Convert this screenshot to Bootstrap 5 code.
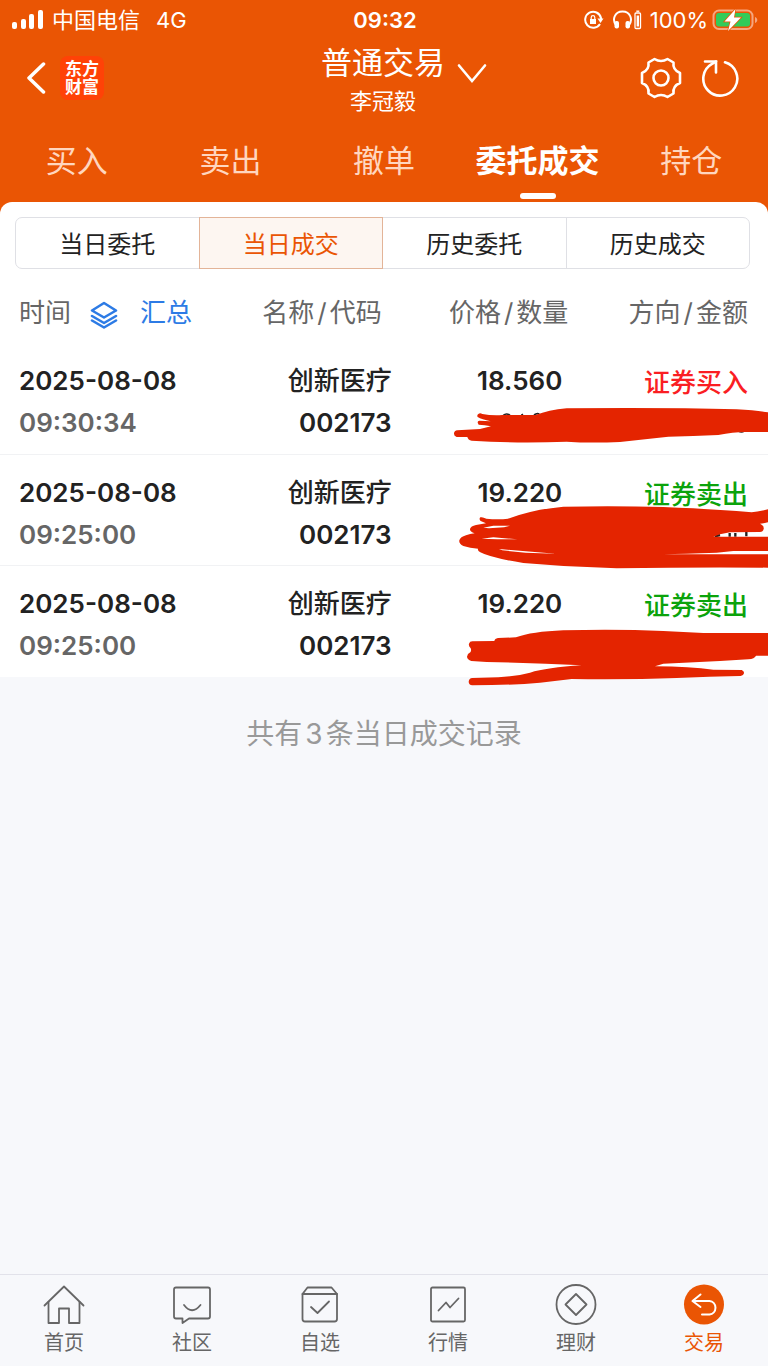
<!DOCTYPE html>
<html lang="zh-CN">
<head>
<meta charset="utf-8">
<meta name="viewport" content="width=device-width, initial-scale=1">
<title>普通交易 - 当日成交</title>
<link href="https://cdn.jsdelivr.net/npm/bootstrap@5.3.0/dist/css/bootstrap.min.css" rel="stylesheet">
<style>
  :root { --brand: #ea5504; --ink: #222; --muted: #666; --line: #dfe0e5; --page: #f7f8fb; }
  body { font-family: Inter, "Noto Sans CJK SC", sans-serif; background: var(--page); color: var(--ink); }
  svg { display: block; flex: none; }
  button, a { color: inherit; text-decoration: none; }
  .plain { background: none; border: 0; padding: 0; }
  .topbar { background: var(--brand); padding-bottom: 12px; }
  .status { height: 40px; font-size: 22px; line-height: 40px; padding: 0 10px 0 12px; }
  .status > div { flex: 1 1 0; }
  .clock { font-size: 22px; font-weight: 600; }
  .title-row { height: 80px; padding: 0 29px 4px 27px; }
  .title-row > div { flex: 1 1 0; }
  .title-block { padding-top: 4px; }
  .app-logo { width: 44px; height: 44px; border-radius: 8px; margin-left: 13px; background: #ff4207; font-size: 17px; line-height: 18px; font-weight: 700; }
  .page-title { font-size: 31px; line-height: 42px; font-weight: 400; margin: 0; }
  .user-name { font-size: 22px; line-height: 34px; }
  .chevron { position: absolute; left: 100%; top: 21px; margin-left: 12px; }
  .tools { gap: 19px; }
  .main-tabs { height: 82px; }
  .main-tabs a { flex: 1 1 0; font-size: 31px; line-height: 82px; color: #ffd6bf; position: relative; }
  .main-tabs a.active { font-weight: 700; color: #fff; }
  .main-tabs a.active::after { content: ""; position: absolute; left: 50%; bottom: 3px; width: 36px; height: 6px; margin-left: -18px; border-radius: 3px; background: #fff; }
  .sheet { background: #fff; border-radius: 12px 12px 0 0; margin-top: -12px; padding-top: 15px; }
  .segments { margin: 0 18px 0 15px; border: 1px solid var(--line); border-radius: 7px; height: 52px; }
  .segments button { flex: 1 1 0; font-size: 24px; padding-top: 3px; border-left: 1px solid var(--line); }
  .segments button:first-child { border-left: 0; }
  .segments button.active { color: var(--brand); background: #fdf6f1; border: 1px solid #e3b498; margin: -1px -1px -1px 0; z-index: 1; }
  .deals { width: 100%; table-layout: fixed; font-size: 26px; line-height: 42px; }
  .deals th { font-weight: 400; color: var(--muted); padding: 23px 0 9px; }
  .deals td { font-weight: 600; padding: 17px 0 9px; border-bottom: 1px solid #f1f2f4; height: 111px; vertical-align: top; white-space: nowrap; }
  .deals tbody tr:last-child td { border-bottom-color: #fff; }
  .deals .c-time { padding-left: 19px; }
  .deals th.c-name { padding-right: 10px; }
  .deals td.c-price { padding-right: 6px; }
  .deals .c-side { padding-right: 20px; }
  .deals td.c-side { position: relative; padding-top: 19px; padding-bottom: 7px; }
  .deals .cn { font-weight: 500; }
  .gapped { margin: 0 3px; }
  .clock-time { color: var(--muted); }
  .summary { color: #2d7be5; margin-left: 19px; gap: 22px; }
  .summary svg { margin-top: 4px; }
  .buy { color: #fa1e23; }
  .sell { color: #0ba30b; }
  .scribble { position: absolute; right: 0; top: 0; z-index: 2; overflow: visible; fill: #e42400; }
  .total { font-size: 28px; line-height: 42px; color: #999; margin: 36px 0; }
  .bottom-nav { border-top: 1px solid #e2e2ea; height: 92px; padding-top: 9px; }
  .bottom-nav a { flex: 1 1 0; font-size: 20px; line-height: 34px; color: var(--muted); }
  .bottom-nav a.active { color: var(--brand); }
</style>
</head>
<body class="d-flex flex-column min-vh-100">
<header class="topbar text-white">
  <div class="status d-flex align-items-center">
    <div class="d-flex align-items-center">
      <svg width="32" height="20" viewBox="0 0 32 20" fill="#fff"><rect y="12" width="5" height="7" rx="2"/><rect x="9" y="9" width="5" height="10" rx="2"/><rect x="17" y="4" width="5" height="15" rx="2"/><rect x="26" width="5" height="19" rx="2"/></svg>
      <span class="ms-2">中国电信</span><span class="ms-3">4G</span>
    </div>
    <div class="clock text-center">09:32</div>
    <div class="d-flex align-items-center justify-content-end">
      <svg width="20" height="20" viewBox="0 0 20 20" fill="none" stroke="#fff" stroke-width="2"><path d="M16 14a8 8 0 1 1 1-6v2"/><path d="M13.500 8.500h6L16.500 13z" fill="#fff" stroke="none"/><path d="M6 9h6v5H6z" fill="#fff" stroke="none"/><path d="M7.200 9.500V7.500a1.800 1.800 0 0 1 3.600 0v2" stroke-width="1.200"/></svg>
      <svg class="ms-2" width="30" height="20" viewBox="0 0 30 20" fill="none" stroke="#fff"><path d="M4.500 16C-.500 10 2.500 1.500 10.500 1.500S21.500 10 16.500 16" stroke-width="2"/><rect x="2.500" y="11" width="4.500" height="7.500" rx="2" fill="#fff" stroke="none"/><rect x="13.500" y="11" width="4.500" height="7.500" rx="2" fill="#fff" stroke="none"/><rect x="23" y="3" width="5.500" height="15.500" rx="1" stroke-width="1.300"/><path d="M25.800 5.500v11" stroke-width="2.400"/><path d="M24.300 1.200h3" stroke-width="1.400"/></svg>
      <span class="ms-2">100%</span>
      <svg class="ms-1" width="46" height="24" viewBox="0 0 46 24"><rect x="1.500" y="2.500" width="39" height="18.500" rx="5.500" fill="none" stroke="#f6a67f" stroke-width="2"/><rect x="4" y="5" width="34" height="13.500" rx="3" fill="#32cb59"/><path d="M43 9c3 1 3 5 0 6z" fill="#f6a67f"/><path d="M23.500 1 12.500 13.500h6L16 23l13-13.500h-7z" fill="#fff" stroke="#ea5504" stroke-width="1.500" paint-order="stroke"/></svg>
    </div>
  </div>
  <div class="title-row d-flex align-items-center">
    <div class="d-flex align-items-center">
      <button class="plain" aria-label="返回"><svg width="20" height="34" viewBox="0 0 20 34" fill="none" stroke="#fff" stroke-width="3.500" stroke-linecap="round" stroke-linejoin="round"><path d="M16.500 3 2 17l14.500 14"/></svg></button>
      <a href="#" class="app-logo d-flex align-items-center text-center justify-content-center"><span>东方<br>财富</span></a>
    </div>
    <div class="title-block text-center">
      <button class="plain position-relative"><span class="page-title d-block">普通交易</span>
        <svg class="chevron" width="30" height="22" viewBox="0 0 30 22" fill="none" stroke="#fff" stroke-width="2.600" stroke-linecap="round"><path d="M2 2.500 15 18 28 2.500"/></svg></button>
      <div class="user-name">李冠毅</div>
    </div>
    <div class="tools d-flex align-items-center justify-content-end">
      <button class="plain" aria-label="设置"><svg width="42" height="42" viewBox="0 0 42 42" fill="none" stroke="#fff" stroke-width="2.600" stroke-linejoin="round"><path d="M14.500 2q6.500 4 13 0l6 3.500q-1 7.500 6.500 10.500v10q-7.500 3-6.500 10.500l-6 3.500q-6.500-4-13 0l-6-3.500Q9.500 29 2 26V16q7.500-3 6.500-10.500z"/><circle cx="21" cy="21" r="7.500"/></svg></button>
      <button class="plain" aria-label="刷新"><svg width="38" height="40" viewBox="0 0 38 40" fill="none" stroke="#fff" stroke-width="2.600" stroke-linecap="round"><path d="M24 4.300A17 17 0 1 1 11 5.800L15 3.500"/><path d="M4 3.500h11v11"/></svg></button>
    </div>
  </div>
  <nav class="main-tabs d-flex text-center">
    <a href="#">买入</a><a href="#">卖出</a><a href="#">撤单</a><a href="#" class="active" aria-current="page">委托成交</a><a href="#">持仓</a>
  </nav>
</header>

<main class="flex-grow-1">
  <section class="sheet">
    <div class="segments d-flex">
      <button class="plain">当日委托</button><button class="plain active">当日成交</button><button class="plain">历史委托</button><button class="plain">历史成交</button>
    </div>
    <table class="deals">
      <colgroup><col style="width:30%"><col style="width:21%"><col style="width:23%"><col></colgroup>
      <thead>
        <tr>
          <th class="c-time"><div class="d-flex align-items-center">时间
            <button class="plain summary d-flex align-items-center"><svg width="28" height="28" viewBox="0 0 28 28" fill="none" stroke="currentColor" stroke-width="2.600" stroke-linejoin="round" stroke-linecap="round"><path d="M14 2 26 9.500 14 16.500 2 9.500z"/><path d="m2 15 12 7 12-7M2 19.500l12 7 12-7"/></svg>汇总</button></div></th>
          <th class="c-name text-end">名称<span class="gapped">/</span>代码</th>
          <th class="c-price text-end">价格<span class="gapped">/</span>数量</th>
          <th class="c-side text-end">方向<span class="gapped">/</span>金额</th>
        </tr>
      </thead>
      <tbody>
        <tr>
          <td class="c-time">2025-08-08<div class="clock-time">09:30:34</div></td>
          <td class="c-name text-end"><span class="cn">创新医疗</span><br>002173</td>
          <td class="c-price text-end">18.560</td>
          <td class="c-side text-end"><span class="cn buy">证券买入</span>
            <svg class="scribble" width="314" height="130" viewBox="72 -21 942 390"><path d="M220 196q9-8 20 0M274 196l5-3M312 195q8-6 16-3M926 244q10 4 16-1" fill="none" stroke="#222" stroke-width="5"/><path d="M145 192q5-4 12 0 28 5 60 3l100 0Q355 180 410 175Q700 172 920 178Q980 181 1014 187V246H945Q910 246 865 255Q790 258 715 260Q640 268 570 276Q480 280 410 275Q260 281 125 272Q114 270 112 261H80Q71 258 72 250 73 242 82 241L150 237 183 229Q164 225 146 224 139 214 148 212L182 214Q155 208 143 201 140 195 145 192z"/></svg></td>
        </tr>
        <tr>
          <td class="c-time">2025-08-08<div class="clock-time">09:25:00</div></td>
          <td class="c-name text-end"><span class="cn">创新医疗</span><br>002173</td>
          <td class="c-price text-end">19.220</td>
          <td class="c-side text-end"><span class="cn sell">证券卖出</span>
            <svg class="scribble" width="314" height="130" viewBox="72 -18 942 390"><path d="M854 226l16-4M899 216v11M916 216v11M949 213v13" fill="none" stroke="#222" stroke-width="7"/><path d="M151 169q7-2 18 4 36 3 65 0Q310 145 400 137Q560 134 700 138Q850 144 965 154Q985 152 1014 145V184Q1000 188 990 188 1003 194 1001 204 999 214 988 213L900 214 870 220 850 227H1014V270H910L860 275Q760 278 700 280H1014V320Q800 318 560 322Q420 319 280 306Q180 290 151 274 142 270 144 263 120 261 100 255 86 248 88 238 91 228 108 223 120 219 134 217 119 213 120 204 122 195 138 192L168 187 152 180Q146 174 151 169z"/><path d="m160 200 30-6 50 0-18 5-45 3zM155 233l35-4 72 6-60 0zM207 264l80 7 90 7-90-3-70-7z" fill="#fff"/></svg></td>
        </tr>
        <tr>
          <td class="c-time">2025-08-08<div class="clock-time">09:25:00</div></td>
          <td class="c-name text-end"><span class="cn">创新医疗</span><br>002173</td>
          <td class="c-price text-end">19.220</td>
          <td class="c-side text-end"><span class="cn sell">证券卖出</span>
            <svg class="scribble" width="314" height="130" viewBox="72 -15 942 390"><path d="M127 211 193 210Q194 203 204 201L258 199Q305 182 400 178Q560 174 700 180L820 186H1014V254H978Q974 263 955 265L870 270 700 278 675 286Q780 287 850 296L935 297Q943 300 942 307 941 314 932 315Q840 317 740 321Q600 326 425 324L330 335Q240 343 127 343 116 341 116 332 117 322 127 321L205 319Q260 316 300 305Q350 290 455 283Q320 276 170 273L124 270Q112 266 111 257 112 248 121 244 125 238 122 232 115 226 117 218 119 211 127 211z"/></svg></td>
        </tr>
      </tbody>
    </table>
  </section>
  <p class="total text-center">共有<span class="gapped">3</span>条当日成交记录</p>
</main>

<nav class="bottom-nav d-flex text-center">
  <a href="#" class="d-flex flex-column align-items-center"><svg width="42" height="42" viewBox="0 0 42 42" fill="none" stroke="currentColor" stroke-width="1.800" stroke-linejoin="round" stroke-linecap="round"><path d="M1.500 21.500 21 2.500l19.500 19"/><path d="M5.500 18v21H16V24.500h10V39h10.500V18"/></svg>首页</a>
  <a href="#" class="d-flex flex-column align-items-center"><svg width="42" height="42" viewBox="0 0 42 42" fill="none" stroke="currentColor" stroke-width="1.800" stroke-linejoin="round" stroke-linecap="round"><path d="M5 3.500h32q2 0 2 2v27q0 2-2 2H18L11.500 39v-4.500H5q-2 0-2-2v-27q0-2 2-2z"/><path d="M13 21q8 10.500 16.500 0"/></svg>社区</a>
  <a href="#" class="d-flex flex-column align-items-center"><svg width="42" height="42" viewBox="0 0 42 42" fill="none" stroke="currentColor" stroke-width="1.800" stroke-linejoin="round" stroke-linecap="round"><path d="M8.500 3.500h24l5.500 6.500v25q0 2.500-2.500 2.500H6Q3.500 37.500 3.500 35V10z"/><path d="M3.500 10H38M12 23l6.500 6L30 17.500"/></svg>自选</a>
  <a href="#" class="d-flex flex-column align-items-center"><svg width="42" height="42" viewBox="0 0 42 42" fill="none" stroke="currentColor" stroke-width="1.800" stroke-linejoin="round" stroke-linecap="round"><rect x="4" y="3.500" width="34" height="34" rx="1.500"/><path d="m11.500 26.500 7.500-8 4 5 8.500-9"/></svg>行情</a>
  <a href="#" class="d-flex flex-column align-items-center"><svg width="42" height="42" viewBox="0 0 42 42" fill="none" stroke="currentColor" stroke-width="1.800" stroke-linejoin="round"><circle cx="21" cy="20.500" r="19.500"/><path d="M21 10 31.500 20.500 21 31 10.500 20.500z"/></svg>理财</a>
  <a href="#" class="active d-flex flex-column align-items-center" aria-current="page"><svg width="42" height="42" viewBox="0 0 42 42" fill="none" stroke="#fff" stroke-width="2" stroke-linejoin="round" stroke-linecap="round"><circle cx="21" cy="20.500" r="20" fill="#ea5504" stroke="none"/><path d="M17.500 10.500 9.500 17l8 6M10 17h16.500a6.800 6.800 0 0 1 0 13.500H19"/></svg>交易</a>
</nav>
<script src="https://cdn.jsdelivr.net/npm/bootstrap@5.3.0/dist/js/bootstrap.bundle.min.js"></script>
</body>
</html>
